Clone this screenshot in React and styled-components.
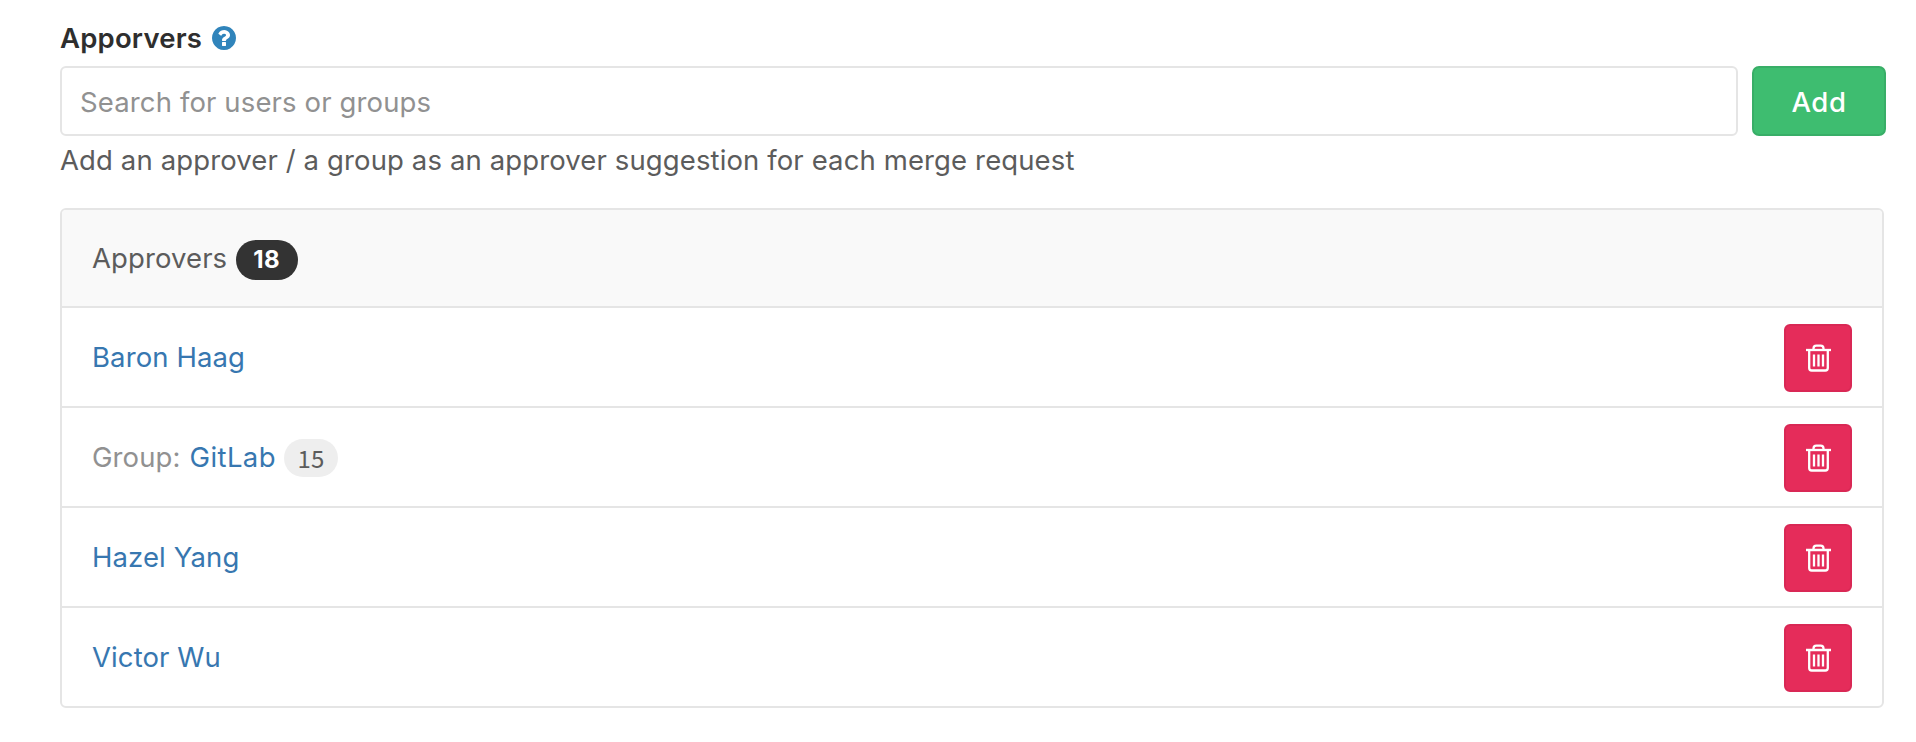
import React from "react";
import styled, { createGlobalStyle } from "styled-components";

const GlobalStyle = createGlobalStyle`
  *, *::before, *::after { box-sizing: border-box; }
  body {
    margin: 0;
    background: #fff;
    color: #5c5c5c;
    font-family: Inter, "Liberation Sans", sans-serif;
    font-size: 27.5px;
    font-weight: 400;
    line-height: 40px;
    letter-spacing: 0.1px;
  }
`;

const Page = styled.main`
  padding: 18px 30px 30px 60px;
`;

const Label = styled.label`
  display: flex;
  align-items: center;
  height: 40px;
  gap: 10px;
  color: #2e2e2e;
  font-weight: 600;
  letter-spacing: 0.2px;
`;

const HelpIcon = styled.svg`
  width: 24px;
  height: 24px;
  flex: none;
`;

const SearchRow = styled.div`
  display: flex;
  gap: 14px;
  margin-top: 8px;
`;

const SearchInput = styled.input`
  flex: 1;
  min-width: 0;
  height: 70px;
  padding: 2px 18px 0;
  border: 2px solid #e5e5e5;
  border-radius: 6px;
  background: #fff;
  font: inherit;
  letter-spacing: 0.13px;
  color: #2e2e2e;
  outline: none;
  &::placeholder { color: #919191; opacity: 1; }
`;

const AddButton = styled.button`
  width: 134px;
  height: 70px;
  padding: 2px 0 0;
  border: 2px solid #38ae67;
  border-radius: 7px;
  background: #3ebd70;
  color: #fff;
  font: inherit;
  font-weight: 550;
  letter-spacing: 0.6px;
`;

const Hint = styled.p`
  margin: 4px 0 28px;
  letter-spacing: 0.12px;
`;

const Panel = styled.section`
  margin-right: 2px;
  border: 2px solid #e5e5e5;
  border-radius: 6px;
  overflow: hidden;
`;

const PanelHeader = styled.header`
  display: flex;
  align-items: center;
  height: 96px;
  padding: 0 30px;
  background: #f9f9f9;
`;

const CountBadge = styled.span`
  display: flex;
  align-items: center;
  justify-content: center;
  width: 62px;
  height: 40px;
  margin: 4px 0 0 9px;
  padding-right: 1px;
  border-radius: 20px;
  background: #333;
  color: #fff;
  font-size: 24px;
  font-weight: 700;
  letter-spacing: 0.6px;
`;

const MemberBadge = styled(CountBadge)`
  width: 54px;
  height: 38px;
  margin: 2px 0 0 8px;
  padding: 0 0 1px;
  background: #eee;
  color: #5c5c5c;
  font-family: "Noto Sans CJK JP", sans-serif;
  font-size: 24px;
  font-weight: 400;
  letter-spacing: 0;
`;

const List = styled.ul`
  margin: 0;
  padding: 0;
  list-style: none;
`;

const Row = styled.li`
  display: flex;
  align-items: center;
  height: 100px;
  padding: 0 30px;
  border-top: 2px solid #e5e5e5;
`;

const Name = styled.a`
  color: #3777b0;
  letter-spacing: ${(p) => (p.$group ? "0.4px" : "0.1px")};
`;

const Prefix = styled.span`
  margin-right: 9px;
  color: #919191;
`;

const DeleteButton = styled.button`
  display: flex;
  align-items: center;
  justify-content: center;
  width: 68px;
  height: 68px;
  margin: 2px 0 0 auto;
  padding: 0;
  border: 2px solid #d92855;
  border-radius: 6px;
  background: #e52c5a;
  color: #fff;
`;

const approvers = [
  { name: "Baron Haag" },
  { name: "GitLab", group: true, members: 15 },
  { name: "Hazel Yang" },
  { name: "Victor Wu" },
];

function Help() {
  return (
    <HelpIcon viewBox="0 0 1536 1536" aria-hidden="true">
      <path
        fill="#3084bb"
        d="M896 1248v-192q0-14-9-23t-23-9H672q-14 0-23 9t-9 23v192q0 14 9 23t23 9h192q14 0 23-9t9-23zm256-672q0-88-55.500-163T958 297t-170-41q-243 0-371 213-15 24 8 42l132 100q7 6 19 6 16 0 25-12 53-68 86-92 34-24 86-24 48 0 85.500 26t37.500 59q0 38-20 61t-68 45q-63 28-115.500 86.500T640 892v36q0 14 9 23t23 9h192q14 0 23-9t9-23q0-19 21.500-49.500T972 829q32-18 49-28.500t46-35 44.500-48 28-60.500 12.500-81zm384 192q0 209-103 385.500T1153.500 1433 768 1536t-385.500-103T103 1153.500 0 768t103-385.500T382.500 103 768 0t385.500 103T1433 382.500 1536 768z"
      />
    </HelpIcon>
  );
}

function Trash() {
  return (
    <svg width="26" height="28" viewBox="0 0 26 28" fill="none" stroke="currentColor" strokeWidth="2.300" aria-hidden="true">
      <path d="M1 6h25" />
      <path d="M8.500 5.500V4.500q0-2.800 2.800-2.800h4.400q2.800 0 2.800 2.800v1" />
      <path d="M4.200 6v18q0 2.500 2.500 2.500h13.600q2.500 0 2.500-2.500V6" />
      <path d="M9 10.500v12M13.500 10.500v12M18 10.500v12" />
    </svg>
  );
}

export default function App() {
  return (
    <>
      <GlobalStyle />
      <Page>
        <Label htmlFor="approver-search">
          <span>Apporvers</span>
          <Help />
        </Label>
        <SearchRow>
          <SearchInput id="approver-search" placeholder="Search for users or groups" />
          <AddButton type="button">Add</AddButton>
        </SearchRow>
        <Hint>Add an approver / a group as an approver suggestion for each merge request</Hint>
        <Panel>
          <PanelHeader>
            <span>Approvers</span>
            <CountBadge>18</CountBadge>
          </PanelHeader>
          <List>
            {approvers.map(({ name, group, members }) => (
              <Row key={name}>
                {group && <Prefix>Group:</Prefix>}
                <Name $group={group}>{name}</Name>
                {members && <MemberBadge>{members}</MemberBadge>}
                <DeleteButton type="button" aria-label={`Remove ${name}`}>
                  <Trash />
                </DeleteButton>
              </Row>
            ))}
          </List>
        </Panel>
      </Page>
    </>
  );
}
